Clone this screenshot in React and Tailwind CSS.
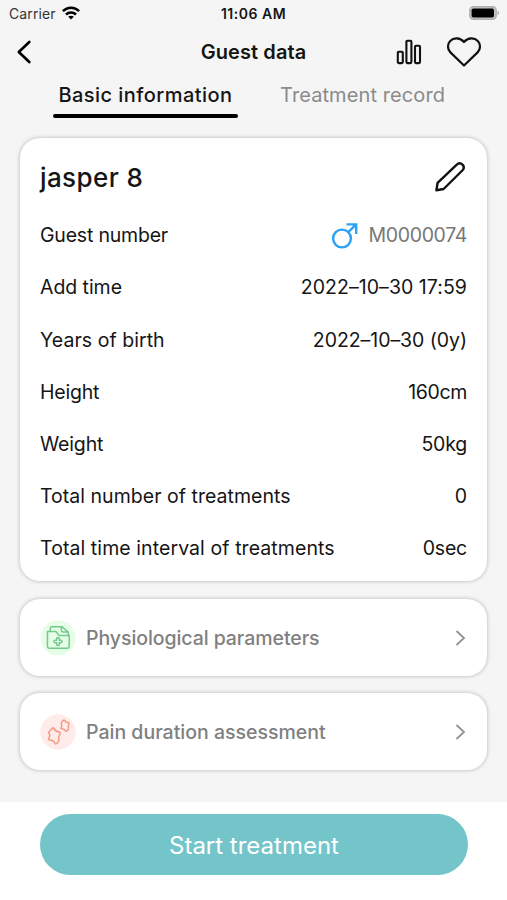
const ROWS = [
  { label: 'Add time', value: '2022–10–30 17:59', labelClass: 'tracking-[-0.05px]', valueClass: 'tracking-[0.05px]' },
  { label: 'Years of birth', value: '2022–10–30 (0y)', labelClass: 'tracking-[0.05px]', valueClass: 'tracking-[-0.06px]' },
  { label: 'Height', value: '160cm', labelClass: 'tracking-[-0.2px]', valueClass: 'tracking-[-0.35px]' },
  { label: 'Weight', value: '50kg', labelClass: 'tracking-[-0.15px]', valueClass: 'tracking-[-0.2px]' },
  { label: 'Total number of treatments', value: '0', labelClass: 'tracking-[0.03px]', valueClass: '' },
  { label: 'Total time interval of treatments', value: '0sec', labelClass: 'tracking-[0.08px]', valueClass: 'tracking-[-0.2px]' },
];

function WifiIcon() {
  return (
    <svg width="18" height="14" viewBox="0 0 18 14" fill="none" stroke="#000" strokeWidth="2.5">
      <path d="M.9 5.2C5.4.6 12.6.6 17.1 5.2" />
      <path d="M4 8.5c2.8-2.7 7.2-2.7 10 0" />
      <path d="M9 13.6 6.2 10.8c1.6-1.4 4-1.4 5.6 0z" fill="#000" stroke="none" />
    </svg>
  );
}

function BatteryIcon() {
  return (
    <svg width="31" height="14" viewBox="0 0 31 14">
      <rect x=".8" y=".8" width="26.4" height="12.4" rx="3.6" fill="#c4c4c4" stroke="#b0b0b0" strokeWidth="1.4" />
      <rect x="2.6" y="2.4" width="22.4" height="9.2" rx="1.8" fill="#000" />
      <path d="M28.6 4.8c1.9.5 1.9 3.9 0 4.4z" fill="#aaa" />
    </svg>
  );
}

function BackIcon() {
  return (
    <svg width="16" height="24" viewBox="0 0 16 24" fill="none" stroke="#000" strokeWidth="2.7" strokeLinecap="round" strokeLinejoin="round">
      <path d="M13.3 2 2.8 12l10.5 10" />
    </svg>
  );
}

function ChartIcon() {
  return (
    <svg width="26" height="26" viewBox="0 0 26 26" fill="none" stroke="#111" strokeWidth="2.1">
      <rect x="1.8" y="12.8" width="5" height="11.3" rx="1" />
      <rect x="10.4" y="1.8" width="5" height="22.3" rx="1" />
      <rect x="19" y="6.8" width="5" height="17.3" rx="1" />
    </svg>
  );
}

function HeartIcon() {
  return (
    <svg width="36" height="32" viewBox="0 0 36 32" fill="none" stroke="#111" strokeWidth="2.2" strokeLinejoin="round">
      <path d="M18 29.5 4.4 16.4C1.2 13.2 1.2 8 4.2 5 7.8 1.2 14.2 1.6 18 6c3.8-4.4 10.2-4.8 13.8-1 3 3 3 8.2-.2 11.4z" />
    </svg>
  );
}

function PencilIcon() {
  return (
    <svg width="32" height="32" viewBox="0 0 32 32" fill="none" stroke="#111" strokeWidth="2.4" strokeLinejoin="round">
      <path d="M2.4 29.3 3.6 21.8 22.5 3.8c1.9-1.8 4.3-1.8 6-.2 1.6 1.7 1.6 4-.2 5.9L9.6 28z" />
    </svg>
  );
}

function MaleIcon() {
  return (
    <svg width="28" height="28" viewBox="0 0 28 28" fill="none" stroke="#2ba2f5" strokeWidth="2.4">
      <circle cx="11" cy="16.5" r="8.9" />
      <path d="M17.3 10.2 24.9 2.6M15.5 2.4h9.7V12" />
    </svg>
  );
}

function FolderIcon() {
  return (
    <svg width="36" height="36" viewBox="0 0 36 36" fill="none" stroke="#74c88b" strokeWidth="1.5" strokeLinejoin="round">
      <circle cx="18" cy="18" r="17.5" fill="#e6fde8" stroke="none" />
      <path d="M7.5 11.5h7.6q1 0 1.6.9l1.6 2.300q.6.8 1.600.8h9.300v11.100q0 1.700-1.700 1.700H9.200q-1.700 0-1.700-1.700z" />
      <path d="M10.300 11.300V8.300q0-1.600 1.600-1.600h9.900l6.400 5.300v3.300M21.400 7v3.600q0 1.400 1.400 1.400H28" />
      <path d="M16.700 18.500q0-1 1-1h.6q1 0 1 1v1.700H21q1 0 1 1v.6q0 1-1 1h-1.700v1.700q0 1-1 1h-.6q-1 0-1-1v-1.700H15q-1 0-1-1v-.6q0-1 1-1h1.700z" />
    </svg>
  );
}

function PainIcon() {
  return (
    <svg width="36" height="36" viewBox="0 0 36 36" fill="none" stroke="#f49a84" strokeWidth="1.5" strokeLinejoin="round">
      <circle cx="18" cy="18" r="17.7" fill="#ffebea" stroke="none" />
      <path d="M12.300 14.200c.5-.6 1.100-.5 1.500.2 1.100 2.300 2.700 3.400 5.500 3.700 1 .1 1.300.7.800 1.500-1.500 2.500-1.900 4-1.300 6.300.2.800 0 1.300-.5 1.900L16.600 29.500c-.6.600-1.200.5-1.500-.3-.9-2.100-2.400-3.100-5.600-3.300-1-.1-1.300-.6-.8-1.400 1.500-2.200 1.700-3.300.3-5.200-.5-.7-.4-1.100.1-1.600z" />
      <path d="M23.300 6.300c.4-.5.900-.4 1.200.1.8 1.500 1.900 2.200 3.800 2.400.8.1 1 .5.600 1.200-.9 1.600-1 2.600-.4 4.200.2.500.1.900-.3 1.300l-1.500 1.500c-.5.500-1 .4-1.200-.2-.7-1.400-1.700-2-3.700-2.100-.8 0-1-.5-.6-1.100.9-1.400 1-2.200.2-3.600-.3-.5-.2-.9.100-1.300z" />
    </svg>
  );
}

function LinkCard({ icon, label, labelClass }) {
  return (
    <button className="flex h-[77px] w-full items-center rounded-[20px] bg-white pl-5 pr-[21px] text-left shadow-[0_0_4px_rgba(0,0,0,0.27)]">
      {icon}
      <span className={`ml-[10px] flex-1 whitespace-nowrap pt-0.5 text-[19.5px] font-medium text-[#808080] ${labelClass}`}>{label}</span>
      <svg width="11" height="18" viewBox="0 0 11 18" fill="none" stroke="#929292" strokeWidth="1.8">
        <path d="m1.5 2 7.5 7-7.5 7" />
      </svg>
    </button>
  );
}

export default function App() {
  return (
    <div className="flex h-[900px] w-[507px] flex-col overflow-hidden bg-[#f5f5f5] font-['Inter',sans-serif] text-[#151515]">
      <header>
        <div className="grid h-[28px] grid-cols-[1fr_auto_1fr] items-center px-[7px] pb-0.5 text-[14px]">
          <div className="flex items-center gap-[6px] pl-0.5">
            <span className="tracking-[0.1px] text-[#333]">Carrier</span>
            <WifiIcon />
          </div>
          <span className="text-[14px] font-semibold tracking-[0.5px]">11:06 AM</span>
          <div className="flex justify-end"><BatteryIcon /></div>
        </div>
        <div className="grid h-12 grid-cols-[1fr_auto_1fr] items-center px-4">
          <BackIcon />
          <h1 className="text-[20px] font-semibold tracking-[0.1px]">Guest data</h1>
          <div className="mr-[9px] flex items-center justify-end gap-6">
            <ChartIcon />
            <HeartIcon />
          </div>
        </div>
        <nav className="flex h-[62px] items-start pl-[53px] text-[20px]">
          <div className="flex w-[185px] flex-col items-center">
            <span className="flex h-[38px] items-center whitespace-nowrap pb-px font-medium tracking-[0.45px]">Basic information</span>
            <span className="h-1 w-full rounded-full bg-black" />
          </div>
          <span className="ml-[42px] flex h-[38px] items-center whitespace-nowrap pb-px tracking-[0.1px] text-[#8b8b8b]">Treatment record</span>
        </nav>
      </header>

      <main className="flex flex-1 flex-col px-5">
        <section className="h-[443px] rounded-[20px] bg-white px-5 shadow-[0_0_4px_rgba(0,0,0,0.27)]">
          <div className="flex h-[71px] items-center justify-between pt-[7px]">
            <h2 className="text-[26px] font-medium tracking-[0.4px]">jasper 8</h2>
            <div className="mr-px"><PencilIcon /></div>
          </div>
          <div className="flex h-[53px] items-center justify-between text-[19.5px]">
            <span className="tracking-[-0.2px]">Guest number</span>
            <span className="flex items-center gap-[10px] tracking-[-0.35px] text-[#777]">
              <MaleIcon />
              M0000074
            </span>
          </div>
          {ROWS.map(({ label, value, labelClass, valueClass }) => (
            <div key={label} className="flex h-[52.2px] items-center justify-between whitespace-nowrap text-[19.5px]">
              <span className={labelClass}>{label}</span>
              <span className={valueClass}>{value}</span>
            </div>
          ))}
        </section>
        <div className="mt-[18px] flex flex-col gap-[17px]">
          <LinkCard icon={<FolderIcon />} label="Physiological parameters" labelClass="tracking-[-0.07px]" />
          <LinkCard icon={<PainIcon />} label="Pain duration assessment" labelClass="tracking-[0px]" />
        </div>
      </main>

      <footer className="h-[98px] bg-white px-10 pt-3">
        <button className="h-[61px] w-[428px] rounded-full bg-[#74c5c9] pt-0.5 text-[24px] text-white">Start treatment</button>
      </footer>
    </div>
  );
}
